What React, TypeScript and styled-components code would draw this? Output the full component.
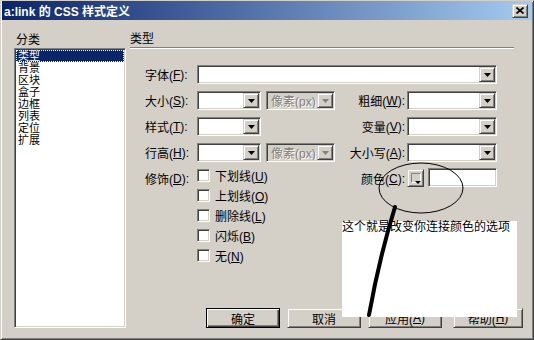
import React from "react";
import styled, { createGlobalStyle, css } from "styled-components";

const GlobalStyle = createGlobalStyle`
  html, body {
    margin: 0;
    padding: 0;
    background: #d4d0c8;
  }
  * {
    box-sizing: border-box;
  }
`;

const FONT = `"Liberation Sans", "Noto Sans CJK SC", sans-serif`;

const sunken = css`
  border: 1px solid;
  border-color: #808080 #fff #fff #808080;
  box-shadow: inset 1px 1px #404040, inset -1px -1px #d4d0c8;
`;

const raised = css`
  border: 1px solid;
  border-color: #d4d0c8 #404040 #404040 #d4d0c8;
  box-shadow: inset 1px 1px #fff, inset -1px -1px #808080;
`;

const Window = styled.div`
  position: relative;
  width: 534px;
  height: 340px;
  display: flex;
  flex-direction: column;
  padding: 0 1px 1px 1px;
  background: #d4d0c8;
  border: 1px solid;
  border-color: #d4d0c8 #404040 #404040 #d4d0c8;
  box-shadow: inset 1px 1px #fff, inset -1px -1px #808080;
  overflow: hidden;
  font-family: ${FONT};
  font-size: 12px;
  color: #000;
`;

const TitleBar = styled.div`
  height: 19px;
  display: flex;
  align-items: center;
  justify-content: space-between;
  padding-left: 2px;
  background: linear-gradient(to right, #0a246a, #a6caf0);
  color: #fff;
  font-weight: bold;
  font-size: 12px;
  white-space: nowrap;
`;

const CloseButton = styled.div`
  ${raised};
  width: 16px;
  height: 14px;
  margin-right: 4px;
  background: #d4d0c8;
  display: flex;
  align-items: center;
  justify-content: center;
`;

const Body = styled.div`
  flex: 1;
  display: grid;
  grid-template-columns: 112px 1fr;
  grid-template-rows: 16px 1fr 20px;
  column-gap: 4px;
  padding: 12px 9px 10px 12px;
`;

const GroupLabel = styled.div`
  line-height: 16px;
  padding-left: 2px;
`;

const PanelHeader = styled.div`
  height: 16px;
  line-height: 15px;
  margin-right: 9px;
  border-bottom: 1px solid #808080;
  box-shadow: 0 1px #fff;
`;

const CategoryList = styled.ul`
  ${sunken};
  grid-row: 2 / 4;
  grid-column: 1;
  margin: 0;
  padding: 1px;
  list-style: none;
  background: #fff;
`;

const CategoryItem = styled.li<{ $selected?: boolean }>`
  height: 12px;
  line-height: 12px;
  font-size: 11px;
  padding-left: 2px;
  white-space: nowrap;
  overflow: hidden;
  ${(p) =>
    p.$selected &&
    css`
      background: #0a246a;
      color: #fff;
      outline: 1px dotted #fff;
      outline-offset: -1px;
    `}
`;

const Form = styled.div`
  grid-row: 2;
  grid-column: 2;
  display: grid;
  grid-template-columns: 52px 64px 74px 72px 90px;
  grid-template-rows: 19px 19px 19px 19px auto;
  row-gap: 7px;
  align-content: start;
  padding: 17px 0 0 15px;
`;

const Label = styled.div<{ $right?: boolean }>`
  display: flex;
  align-items: center;
  height: 19px;
  white-space: nowrap;
  justify-content: ${(p) => (p.$right ? "flex-end" : "flex-start")};
  padding-right: ${(p) => (p.$right ? "2px" : "0")};
  u {
    text-decoration: underline;
  }
`;

const TopLabel = styled(Label)`
  align-self: start;
`;

const ComboBox = styled.div<{ $disabled?: boolean; $span?: string; $width?: number }>`
  ${sunken};
  display: flex;
  height: 19px;
  padding: 1px;
  background: ${(p) => (p.$disabled ? "#d4d0c8" : "#fff")};
  grid-column: ${(p) => p.$span || "auto"};
  width: ${(p) => (p.$width ? `${p.$width}px` : "auto")};
  justify-self: ${(p) => (p.$width ? "end" : "stretch")};
`;

const ComboText = styled.div<{ $disabled?: boolean }>`
  flex: 1;
  display: flex;
  align-items: center;
  padding-left: 3px;
  white-space: nowrap;
  overflow: hidden;
  color: ${(p) => (p.$disabled ? "#808080" : "#000")};
  text-shadow: ${(p) => (p.$disabled ? "1px 1px #fff" : "none")};
`;

const ArrowButton = styled.div`
  ${raised};
  width: 16px;
  height: 15px;
  background: #d4d0c8;
  display: flex;
  align-items: center;
  justify-content: center;
`;

const CheckList = styled.div`
  grid-column: 2 / 4;
  display: flex;
  flex-direction: column;
  gap: 7px;
  align-self: start;
`;

const CheckItem = styled.label`
  display: flex;
  align-items: center;
  gap: 5px;
  height: 13px;
  white-space: nowrap;
`;

const CheckBox = styled.span`
  ${sunken};
  width: 13px;
  height: 13px;
  background: #fff;
`;

const ColorControls = styled.div`
  display: flex;
  gap: 4px;
  align-self: start;
  margin-top: -1px;
`;

const ColorSwatch = styled.div`
  ${raised};
  position: relative;
  width: 17px;
  height: 18px;
  margin-top: 1px;
  background: #d4d0c8;
  padding: 3px;
`;

const SwatchInner = styled.div`
  width: 10px;
  height: 10px;
  border: 1px solid;
  border-color: #808080 #fff #fff #808080;
`;

const SwatchArrow = styled.div`
  position: absolute;
  right: 2px;
  bottom: 2px;
  width: 0;
  height: 0;
  border-left: 3px solid transparent;
  border-right: 3px solid transparent;
  border-top: 3px solid #000;
`;

const TextField = styled.div`
  ${sunken};
  width: 69px;
  height: 19px;
  background: #fff;
`;

const ButtonRow = styled.div`
  grid-row: 3;
  grid-column: 2;
  display: flex;
  justify-content: flex-end;
`;

const DialogButton = styled.div<{ $default?: boolean; $width: number; $gap: number }>`
  width: ${(p) => p.$width}px;
  height: 20px;
  margin-left: ${(p) => p.$gap}px;
  display: flex;
  align-items: center;
  justify-content: center;
  background: #d4d0c8;
  white-space: nowrap;
  ${(p) =>
    p.$default
      ? css`
          border: 1px solid #000;
          box-shadow: inset 1px 1px #fff, inset -1px -1px #404040,
            inset -2px -2px #808080;
        `
      : raised}
`;

const Note = styled.div`
  position: absolute;
  left: 341px;
  top: 220px;
  width: 175px;
  height: 96px;
  background: #fff;
  font-size: 12px;
  line-height: 12px;
  white-space: nowrap;
`;

const Overlay = styled.svg`
  position: absolute;
  left: 0;
  top: 0;
  pointer-events: none;
`;

const Arrow = ({ disabled }: { disabled?: boolean }) => (
  <svg width="7" height="4" viewBox="0 0 7 4">
    <path d="M0 0H7L3.5 4Z" fill={disabled ? "#808080" : "#000"} />
  </svg>
);

const Combo = ({
  text,
  disabled,
  span,
  width,
}: {
  text?: string;
  disabled?: boolean;
  span?: string;
  width?: number;
}) => (
  <ComboBox $disabled={disabled} $span={span} $width={width}>
    <ComboText $disabled={disabled}>{text}</ComboText>
    <ArrowButton>
      <Arrow disabled={disabled} />
    </ArrowButton>
  </ComboBox>
);

const categories = ["类型", "背景", "区块", "盒子", "边框", "列表", "定位", "扩展"];

const decorations = [
  { name: "下划线", key: "U" },
  { name: "上划线", key: "O" },
  { name: "删除线", key: "L" },
  { name: "闪烁", key: "B" },
  { name: "无", key: "N" },
];

const Key = ({ name, k }: { name: string; k: string }) => (
  <>
    {name}(<u>{k}</u>)
  </>
);

export default function App() {
  return (
    <>
      <GlobalStyle />
      <Window>
        <TitleBar>
          a:link 的 CSS 样式定义
          <CloseButton>
            <svg width="8" height="7" viewBox="0 0 8 7">
              <path d="M0.5 0.5L7.5 6.5M7.5 0.5L0.5 6.5" stroke="#000" strokeWidth="1.6" />
            </svg>
          </CloseButton>
        </TitleBar>
        <Body>
          <GroupLabel>分类</GroupLabel>
          <PanelHeader>类型</PanelHeader>
          <CategoryList>
            {categories.map((c, i) => (
              <CategoryItem key={c} $selected={i === 0}>
                {c}
              </CategoryItem>
            ))}
          </CategoryList>
          <Form>
            <Label>
              <Key name="字体" k="F" />:
            </Label>
            <Combo span="2 / 6" />

            <Label>
              <Key name="大小" k="S" />:
            </Label>
            <Combo />
            <Combo text="像素(px)" disabled width={69} />
            <Label $right>
              <Key name="粗细" k="W" />:
            </Label>
            <Combo />

            <Label>
              <Key name="样式" k="T" />:
            </Label>
            <Combo />
            <div />
            <Label $right>
              <Key name="变量" k="V" />:
            </Label>
            <Combo />

            <Label>
              <Key name="行高" k="H" />:
            </Label>
            <Combo />
            <Combo text="像素(px)" disabled width={69} />
            <Label $right>
              <Key name="大小写" k="A" />:
            </Label>
            <Combo />

            <TopLabel>
              <Key name="修饰" k="D" />:
            </TopLabel>
            <CheckList>
              {decorations.map((d) => (
                <CheckItem key={d.key}>
                  <CheckBox />
                  <span>
                    <Key name={d.name} k={d.key} />
                  </span>
                </CheckItem>
              ))}
            </CheckList>
            <TopLabel $right>
              <Key name="颜色" k="C" />:
            </TopLabel>
            <ColorControls>
              <ColorSwatch>
                <SwatchInner />
                <SwatchArrow />
              </ColorSwatch>
              <TextField />
            </ColorControls>
          </Form>
          <ButtonRow>
            <DialogButton $default $width={74} $gap={0}>
              确定
            </DialogButton>
            <DialogButton $width={74} $gap={7}>
              取消
            </DialogButton>
            <DialogButton $width={74} $gap={7}>
              应用(<u>A</u>)
            </DialogButton>
            <DialogButton $width={70} $gap={11}>
              帮助(<u>H</u>)
            </DialogButton>
          </ButtonRow>
        </Body>
        <Note>这个就是改变你连接颜色的选项</Note>
        <Overlay width="534" height="340" viewBox="0 0 534 340">
          <ellipse cx="420" cy="187" rx="42" ry="25" fill="none" stroke="#000" strokeWidth="1" />
          <path d="M394 206 Q378 258 368 314" fill="none" stroke="#000" strokeWidth="4" strokeLinecap="round" />
        </Overlay>
      </Window>
    </>
  );
}
